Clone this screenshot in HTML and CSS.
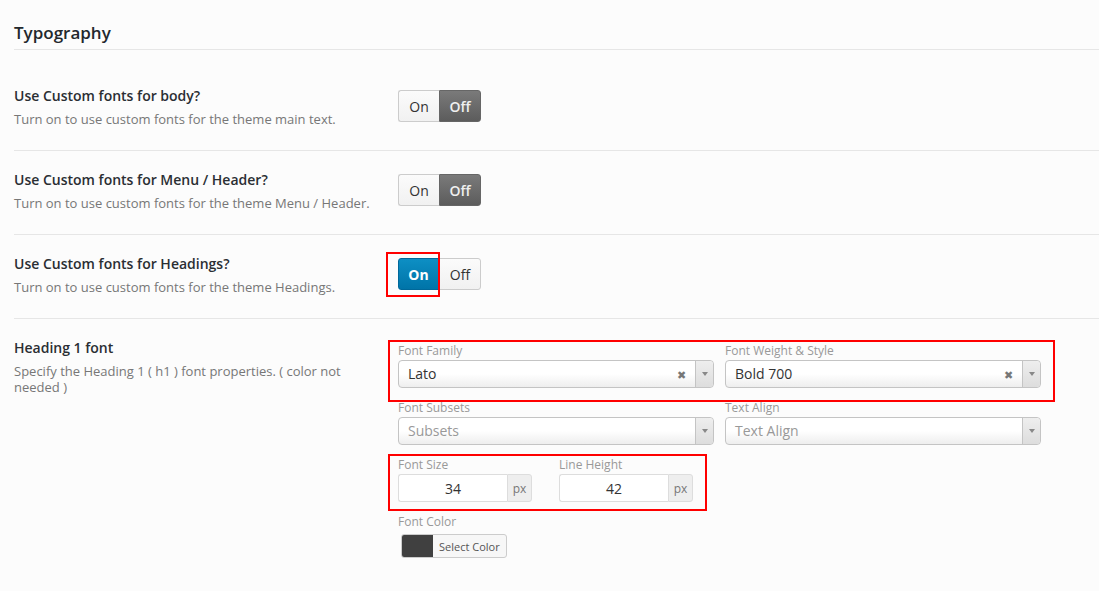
FILE: index.html
```html
<!DOCTYPE html>
<html>
<head>
<meta charset="utf-8">
<link rel="stylesheet" href="styles.css">
</head>
<body>
<div class="page">
  <h2 class="section-title">Typography</h2>

  <div class="row first">
    <div class="label">
      <div class="title">Use Custom fonts for body?</div>
      <div class="desc">Turn on to use custom fonts for the theme main text.</div>
    </div>
    <div class="control">
      <div class="toggle">
        <span class="btn on">On</span><span class="btn off active-off">Off</span>
      </div>
    </div>
  </div>

  <div class="row">
    <div class="label">
      <div class="title">Use Custom fonts for Menu / Header?</div>
      <div class="desc">Turn on to use custom fonts for the theme Menu / Header.</div>
    </div>
    <div class="control">
      <div class="toggle">
        <span class="btn on">On</span><span class="btn off active-off">Off</span>
      </div>
    </div>
  </div>

  <div class="row">
    <div class="label">
      <div class="title">Use Custom fonts for Headings?</div>
      <div class="desc">Turn on to use custom fonts for the theme Headings.</div>
    </div>
    <div class="control">
      <div class="toggle">
        <span class="btn on active-on">On</span><span class="btn off">Off</span>
        <span class="highlight toggle-hl"></span>
      </div>
    </div>
  </div>

  <div class="row last">
    <div class="label">
      <div class="title">Heading 1 font</div>
      <div class="desc">Specify the Heading 1 ( h1 ) font properties. ( color not needed )</div>
    </div>
    <div class="control">
      <div class="fields">
        <div class="grid">
          <div class="field">
            <div class="flabel">Font Family</div>
            <div class="select">
              <span class="value">Lato</span>
              <span class="clear">&#x2716;</span>
              <span class="arrow"><i></i></span>
            </div>
          </div>
          <div class="field">
            <div class="flabel">Font Weight &amp; Style</div>
            <div class="select">
              <span class="value">Bold 700</span>
              <span class="clear">&#x2716;</span>
              <span class="arrow"><i></i></span>
            </div>
          </div>
          <div class="field">
            <div class="flabel">Font Subsets</div>
            <div class="select">
              <span class="value placeholder">Subsets</span>
              <span class="arrow"><i></i></span>
            </div>
          </div>
          <div class="field">
            <div class="flabel">Text Align</div>
            <div class="select">
              <span class="value placeholder">Text Align</span>
              <span class="arrow"><i></i></span>
            </div>
          </div>
        </div>

        <div class="sizes">
          <div class="field">
            <div class="flabel">Font Size</div>
            <div class="input-group">
              <span class="input">34</span><span class="addon">px</span>
            </div>
          </div>
          <div class="field">
            <div class="flabel">Line Height</div>
            <div class="input-group">
              <span class="input">42</span><span class="addon">px</span>
            </div>
          </div>
        </div>

        <div class="field color-field">
          <div class="flabel">Font Color</div>
          <div class="color-btn"><span class="swatch"></span><span class="color-text">Select Color</span></div>
        </div>

        <span class="highlight hl-family"></span>
        <span class="highlight hl-size"></span>
      </div>
    </div>
  </div>
</div>
</body>
</html>
```

FILE: styles.css
```css
* { box-sizing: border-box; }

html, body {
  margin: 0;
  padding: 0;
  background: #fcfcfc;
  font-family: "Open Sans", "Liberation Sans", sans-serif;
  color: #23282d;
}

.page {
  padding-left: 14px;
}

.section-title {
  margin: 0;
  padding-top: 21px;
  height: 50px;
  font-size: 17px;
  font-weight: 600;
  line-height: 24px;
  color: #23282d;
  border-bottom: 1px solid #e6e6e6;
}

.row {
  display: flex;
  padding: 19px 0 21px 0;
  border-bottom: 1px solid #e6e6e6;
  min-height: 84px;
}

.row.first { margin-top: 17px; }

.row.last { border-bottom: none; }

.label {
  width: 384px;
  flex: none;
  padding-right: 24px;
}

.title {
  font-size: 14px;
  font-weight: 600;
  line-height: 20px;
  color: #2a2e33;
}

.desc {
  margin-top: 5px;
  font-size: 13px;
  line-height: 16px;
  color: #777;
}

.control {
  flex: 1;
}

.toggle {
  position: relative;
  display: inline-flex;
  margin-top: 4px;
  height: 32px;
}

.btn {
  display: flex;
  align-items: center;
  justify-content: center;
  height: 32px;
  font-size: 14px;
  color: #333;
  background: linear-gradient(#fbfbfb, #f1f1f1);
  border: 1px solid #ccc;
}

.btn.on {
  width: 41px;
  border-radius: 3px 0 0 3px;
  border-right: none;
}

.btn.off {
  width: 42px;
  border-radius: 0 3px 3px 0;
}

.btn.active-off {
  background: linear-gradient(#7a7a7a, #5c5c5c);
  border-color: #666;
  color: #f0f0f0;
  font-weight: 600;
}

.btn.active-on {
  background: linear-gradient(#0d8fc4, #0074a8);
  border: 1px solid #00689a;
  color: #fff;
  font-weight: 700;
}

.highlight {
  position: absolute;
  border: 2px solid #f00;
  pointer-events: none;
}

.toggle-hl {
  left: -12px;
  top: -6px;
  width: 54px;
  height: 45px;
}

.fields {
  position: relative;
  margin-top: 5px;
}

.grid {
  display: grid;
  grid-template-columns: 316px 316px;
  column-gap: 11px;
}

.field {
  margin-bottom: 12px;
}

.flabel {
  font-size: 12px;
  line-height: 16px;
  color: #999;
  margin-bottom: 1px;
}

.select {
  position: relative;
  display: flex;
  align-items: center;
  height: 28px;
  border: 1px solid #c4c4c4;
  border-radius: 4px;
  background: linear-gradient(#ffffff 50%, #eeeeee);
}

.value {
  flex: 1;
  padding-left: 9px;
  font-size: 14px;
  line-height: 18px;
  margin-top: -1px;
  color: #333;
}

.value.placeholder { color: #999; }

.clear {
  font-size: 11px;
  color: #777;
  margin-right: 9px;
}

.arrow {
  width: 18px;
  height: 100%;
  display: flex;
  align-items: center;
  justify-content: center;
  border-left: 1px solid #c4c4c4;
  border-radius: 0 4px 4px 0;
  background: linear-gradient(#eeeeee, #dddddd);
}

.arrow i {
  width: 0;
  height: 0;
  border-left: 3px solid transparent;
  border-right: 3px solid transparent;
  border-top: 4px solid #888;
}

.sizes {
  display: flex;
  gap: 27px;
}

.input-group {
  display: flex;
  width: 134px;
  height: 28px;
}

.input {
  width: 109px;
  display: flex;
  align-items: center;
  justify-content: center;
  font-size: 14px;
  color: #333;
  background: #fff;
  border: 1px solid #ddd;
  border-right: none;
  border-radius: 3px 0 0 3px;
}

.addon {
  width: 25px;
  display: flex;
  align-items: center;
  justify-content: center;
  font-size: 12px;
  color: #777;
  background: #eee;
  border: 1px solid #ddd;
  border-radius: 0 3px 3px 0;
}

.color-field { margin-bottom: 0; }

.color-btn {
  display: inline-flex;
  margin: 3px 0 0 3px;
  height: 24px;
  border: 1px solid #ccc;
  border-radius: 3px;
  background: #f7f7f7;
  overflow: hidden;
}

.swatch {
  width: 31px;
  background: #404040;
}

.color-text {
  display: flex;
  align-items: center;
  padding: 0 6px 0 6px;
  font-size: 11px;
  color: #555;
}

.hl-family {
  left: -10px;
  top: -3px;
  width: 667px;
  height: 62px;
}

.hl-size {
  left: -10px;
  top: 111px;
  width: 319px;
  height: 57px;
}
```
